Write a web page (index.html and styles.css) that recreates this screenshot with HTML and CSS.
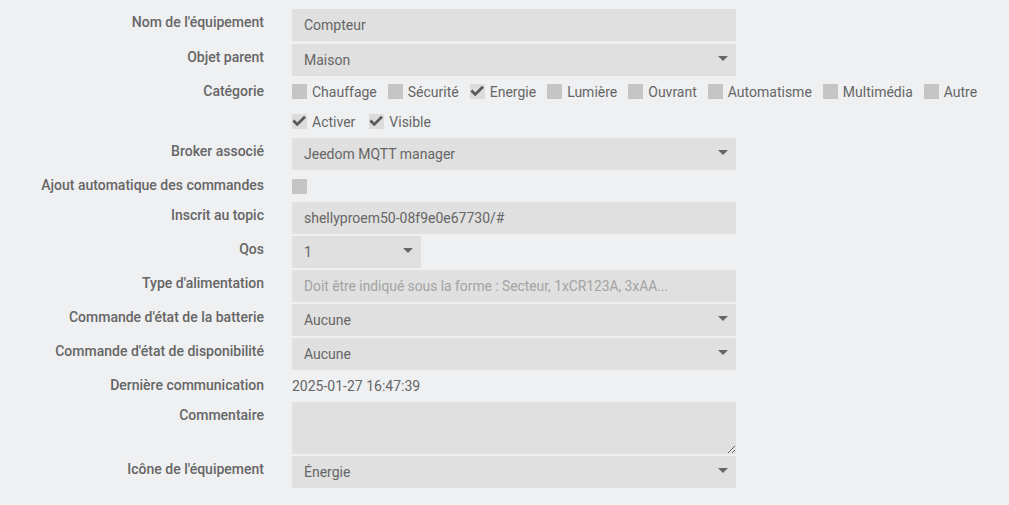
FILE: index.html
```html
<!DOCTYPE html>
<html lang="fr">
<head>
  <meta charset="UTF-8">
  <title>Compteur - Equipement MQTT</title>
  <link rel="stylesheet" href="styles.css">
</head>
<body>
  <form class="eq-form">

    <div class="form-group first">
      <label class="control-label">Nom de l'équipement</label>
      <div class="control"><input type="text" class="form-control" value="Compteur"></div>
    </div>

    <div class="form-group">
      <label class="control-label">Objet parent</label>
      <div class="control select-wrap">
        <select class="form-control"><option>Maison</option></select>
      </div>
    </div>

    <div class="form-group check-row cat-row">
      <label class="control-label">Catégorie</label>
      <div class="control checks">
        <label class="check"><span class="box"></span>Chauffage</label>
        <label class="check"><span class="box"></span>Sécurité</label>
        <label class="check"><span class="box checked"><svg viewBox="0 0 15 15"><path d="M1.4 6.6 L5.2 10.4 L13 2.8"/></svg></span>Energie</label>
        <label class="check"><span class="box"></span>Lumière</label>
        <label class="check"><span class="box"></span>Ouvrant</label>
        <label class="check"><span class="box"></span>Automatisme</label>
        <label class="check"><span class="box"></span>Multimédia</label>
        <label class="check"><span class="box"></span>Autre</label>
      </div>
    </div>

    <div class="form-group check-row opt-row">
      <label class="control-label"></label>
      <div class="control checks">
        <label class="check wide"><span class="box checked"><svg viewBox="0 0 15 15"><path d="M1.4 6.6 L5.2 10.4 L13 2.8"/></svg></span>Activer</label>
        <label class="check wide"><span class="box checked"><svg viewBox="0 0 15 15"><path d="M1.4 6.6 L5.2 10.4 L13 2.8"/></svg></span>Visible</label>
      </div>
    </div>

    <div class="form-group">
      <label class="control-label">Broker associé</label>
      <div class="control select-wrap">
        <select class="form-control"><option>Jeedom MQTT manager</option></select>
      </div>
    </div>

    <div class="form-group check-row">
      <label class="control-label">Ajout automatique des commandes</label>
      <div class="control checks">
        <span class="box"></span>
      </div>
    </div>

    <div class="form-group">
      <label class="control-label">Inscrit au topic</label>
      <div class="control"><input type="text" class="form-control" value="shellyproem50-08f9e0e67730/#"></div>
    </div>

    <div class="form-group">
      <label class="control-label">Qos</label>
      <div class="control select-wrap small">
        <select class="form-control"><option>1</option></select>
      </div>
    </div>

    <div class="form-group">
      <label class="control-label">Type d'alimentation</label>
      <div class="control"><input type="text" class="form-control" placeholder="Doit être indiqué sous la forme : Secteur, 1xCR123A, 3xAA..."></div>
    </div>

    <div class="form-group">
      <label class="control-label">Commande d'état de la batterie</label>
      <div class="control select-wrap">
        <select class="form-control"><option>Aucune</option></select>
      </div>
    </div>

    <div class="form-group">
      <label class="control-label">Commande d'état de disponibilité</label>
      <div class="control select-wrap">
        <select class="form-control"><option>Aucune</option></select>
      </div>
    </div>

    <div class="form-group check-row">
      <label class="control-label">Dernière communication</label>
      <div class="control static">2025-01-27 16:47:39</div>
    </div>

    <div class="form-group">
      <label class="control-label">Commentaire</label>
      <div class="control"><textarea class="form-control comment"></textarea></div>
    </div>

    <div class="form-group">
      <label class="control-label">Icône de l'équipement</label>
      <div class="control select-wrap">
        <select class="form-control"><option>Énergie</option></select>
      </div>
    </div>

  </form>
</body>
</html>
```

FILE: styles.css
```css
body {
  margin: 0;
  background-color: #eff0f2;
  font-family: Roboto, "Liberation Sans", Arial, sans-serif;
  font-size: 14px;
  color: #666;
}

.eq-form {
  padding-top: 9px;
}

.form-group {
  display: flex;
  gap: 28px;
  margin-bottom: 2px;
}

.form-group.first {
  margin-bottom: 3px;
}

.control-label {
  width: 264px;
  flex-shrink: 0;
  text-align: right;
  font-weight: 500;
  line-height: 20px;
  padding-top: 3px;
  color: #666;
}

.control {
  width: 444px;
}

.form-control {
  display: block;
  width: 100%;
  height: 32px;
  box-sizing: border-box;
  border: none;
  border-radius: 0;
  outline: none;
  margin: 0;
  padding: 0 12px;
  background-color: #dfe0df;
  font-family: inherit;
  font-size: 14px;
  color: #666;
}

.form-control::placeholder {
  color: #a3a3a3;
  font-size: 13.8px;
}

select.form-control {
  appearance: none;
  -webkit-appearance: none;
}

.select-wrap {
  position: relative;
}

.select-wrap::after {
  content: "";
  position: absolute;
  right: 8px;
  top: 12px;
  border-left: 5px solid transparent;
  border-right: 5px solid transparent;
  border-top: 5px solid #666;
  pointer-events: none;
}

.select-wrap.small {
  width: 129px;
}

textarea.comment {
  height: 52px;
  padding: 6px 12px;
  resize: vertical;
}

/* checkbox rows */
.check-row {
  height: 28px;
}

.cat-row {
  height: 27px;
}

.opt-row {
  height: 29px;
}

.checks {
  display: flex;
  align-items: center;
  width: auto;
  white-space: nowrap;
}

.check {
  display: flex;
  align-items: center;
  gap: 5px;
  margin-right: 11px;
}

.check.wide {
  margin-right: 14px;
}

.box {
  display: inline-block;
  width: 15px;
  height: 15px;
  background-color: #c5c5c5;
}

.box.checked {
  background-color: #dcdcdc;
}

.box svg {
  display: block;
  width: 15px;
  height: 15px;
}

.box svg path {
  fill: none;
  stroke: #585858;
  stroke-width: 2.8;
}

.static {
  display: flex;
  align-items: center;
}
```
